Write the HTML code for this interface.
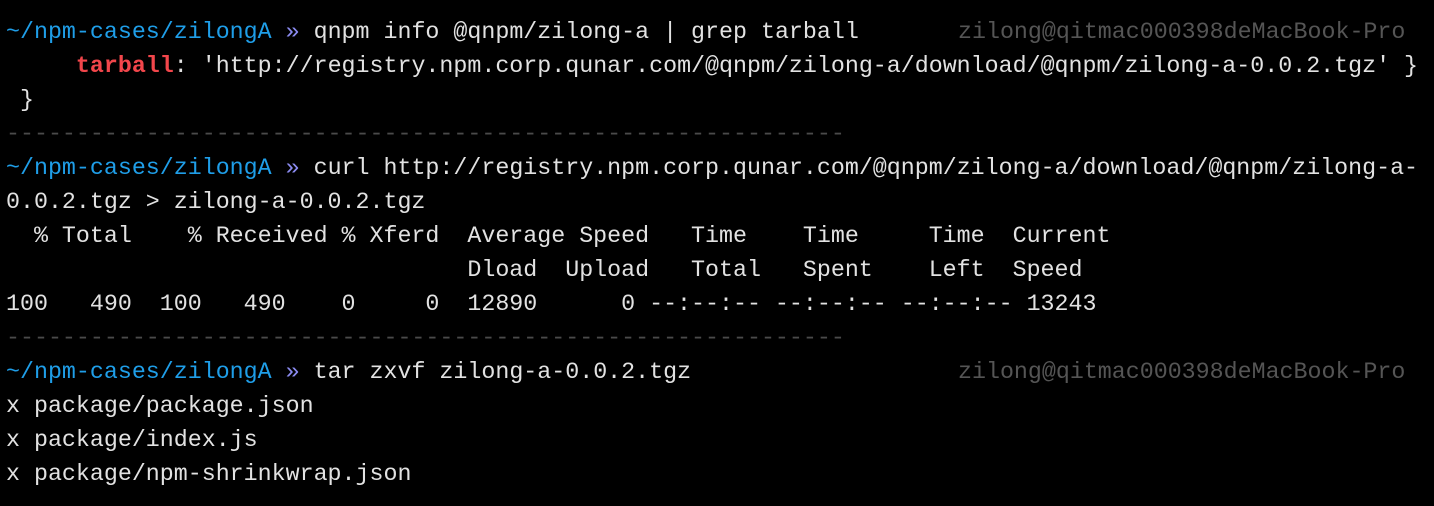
<!DOCTYPE html>
<html><head><style>
body{margin:0;background:#000;width:1434px;height:506px;overflow:hidden}
pre{margin:0;position:absolute;left:6px;top:15px;font-family:"Liberation Mono",monospace;font-size:23.3px;line-height:34px;color:#e2e2e2;white-space:pre}
.b{color:#1f9ee8}.p{color:#8b8bf0}.r{color:#f2464b;font-weight:bold}.d{color:#4a4a4a}.g{color:#555}
.rp{position:absolute;left:958px;font-family:"Liberation Mono",monospace;font-size:23.3px;line-height:34px;color:#555;white-space:pre}
</style></head><body>
<pre><span class="b">~/npm-cases/zilongA</span> <span class="p">»</span> qnpm info @qnpm/zilong-a | grep tarball
     <span class="r">tarball</span>: 'http://registry.npm.corp.qunar.com/@qnpm/zilong-a/download/@qnpm/zilong-a-0.0.2.tgz' }
 }
<span class="d">------------------------------------------------------------</span>
<span class="b">~/npm-cases/zilongA</span> <span class="p">»</span> curl http://registry.npm.corp.qunar.com/@qnpm/zilong-a/download/@qnpm/zilong-a-
0.0.2.tgz &gt; zilong-a-0.0.2.tgz
  % Total    % Received % Xferd  Average Speed   Time    Time     Time  Current
                                 Dload  Upload   Total   Spent    Left  Speed
100   490  100   490    0     0  12890      0 --:--:-- --:--:-- --:--:-- 13243
<span class="d">------------------------------------------------------------</span>
<span class="b">~/npm-cases/zilongA</span> <span class="p">»</span> tar zxvf zilong-a-0.0.2.tgz
x package/package.json
x package/index.js
x package/npm-shrinkwrap.json</pre>
<div class="rp" style="top:15px">zilong@qitmac000398deMacBook-Pro</div>
<div class="rp" style="top:355px">zilong@qitmac000398deMacBook-Pro</div>
</body></html>
